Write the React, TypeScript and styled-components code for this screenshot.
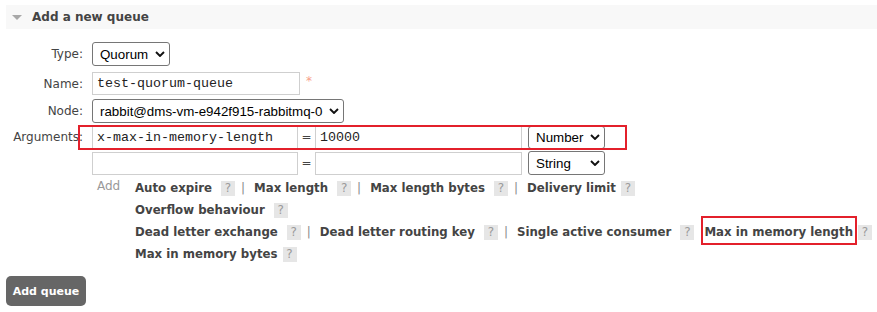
import React from "react";
import styled, { createGlobalStyle } from "styled-components";

const Global = createGlobalStyle`
  html, body { margin: 0; padding: 0; background: #fff; }
  body {
    font-family: "DejaVu Sans", Verdana, sans-serif;
    font-size: 12px;
    color: #484848;
  }
`;

const Page = styled.div`
  padding: 5px 0 0 6px;
  width: 871px;
`;

const SectionHeader = styled.div`
  height: 24px;
  background: #f8f8f8;
  display: flex;
  align-items: center;
  padding-left: 6px;
  gap: 10px;
`;

const Toggle = styled.span`
  width: 0;
  height: 0;
  border-left: 5px solid transparent;
  border-right: 5px solid transparent;
  border-top: 5px solid #a8a8a8;
`;

const Title = styled.h2`
  margin: 0;
  font-size: 12px;
  font-weight: bold;
  color: #444;
`;

const Form = styled.div`
  margin-top: 10px;
  display: flex;
  flex-direction: column;
`;

const Row = styled.div<{ $h: number }>`
  height: ${(p) => p.$h}px;
  display: flex;
  align-items: center;
  position: relative;
`;

const Label = styled.label`
  width: 77px;
  margin-right: 9px;
  flex: none;
  text-align: right;
  color: #444;
`;

const SelectWrap = styled.span<{ $w: number }>`
  position: relative;
  display: inline-flex;
  width: ${(p) => p.$w}px;
  flex: none;
`;

const Select = styled.select<{ $h?: number }>`
  appearance: none;
  -webkit-appearance: none;
  width: 100%;
  height: ${(p) => p.$h ?? 24}px;
  border: 1px solid #767676;
  border-radius: 3px;
  background: #fff;
  padding: 0 12px 0 7px;
  font-family: "Liberation Sans", Arial, sans-serif;
  font-size: 13.33px;
  color: #000;
  outline: none;
`;

const ChevronBox = styled.span`
  position: absolute;
  right: 5px;
  top: 50%;
  transform: translateY(-50%);
  display: flex;
  pointer-events: none;
`;

const TextInput = styled.input<{ $w: number }>`
  box-sizing: border-box;
  width: ${(p) => p.$w}px;
  height: 23px;
  flex: none;
  border: 1px solid #cfcfcf;
  padding: 0 4px;
  font-family: "Liberation Mono", "Courier New", monospace;
  font-size: 13.33px;
  color: #222;
  outline: none;
  background: #fff;
`;

const Mandatory = styled.span`
  color: #f7a08a;
  margin-left: 6px;
  align-self: flex-start;
  margin-top: 5px;
  font-size: 12px;
`;

const Equals = styled.span`
  width: 17px;
  flex: none;
  text-align: center;
  color: #444;
`;

const TypeGap = styled.span`
  width: 6px;
  flex: none;
`;

const Annotation = styled.span`
  position: absolute;
  left: 72px;
  top: 1px;
  width: 549px;
  height: 25px;
  box-sizing: border-box;
  border: 2px solid #e3202b;
  pointer-events: none;
`;

const AddBlock = styled.div`
  display: flex;
  padding-left: 91px;
  padding-top: 1px;
`;

const AddLabel = styled.span`
  width: 38px;
  flex: none;
  color: #999;
  line-height: 22px;
  margin-top: -2px;
`;

const Lines = styled.div`
  display: flex;
  flex-direction: column;
  white-space: nowrap;
`;

const Line = styled.div`
  height: 22px;
  display: flex;
  align-items: center;
  white-space: nowrap;
`;

const Item = styled.span<{ $tight?: boolean }>`
  display: inline-flex;
  align-items: center;
  flex: none;
  gap: ${(p) => (p.$tight ? 5 : 9)}px;
`;

const Link = styled.span<{ $mark?: boolean }>`
  position: relative;
  font-weight: bold;
  font-size: 11.75px;
  color: #444;
  line-height: 14px;
  ${(p) =>
    p.$mark &&
    `&::after {
      content: "";
      position: absolute;
      left: -3px;
      right: -4px;
      top: -9px;
      bottom: -6px;
      border: 2px solid #e3202b;
    }`}
`;

const Help = styled.span`
  width: 14px;
  height: 15px;
  flex: none;
  background: #e6e6e6;
  color: #9a9a9a;
  display: inline-flex;
  align-items: center;
  justify-content: center;
  font-size: 12px;
`;

const Sep = styled.span`
  color: #8a8a8a;
  flex: none;
  margin: 0 9px 0 6px;
`;

const Spacer = styled.span`
  width: 10px;
  flex: none;
`;

const Button = styled.button`
  margin-top: 11px;
  width: 80px;
  height: 30px;
  border: none;
  border-radius: 5px;
  background: #666;
  color: #fff;
  font-family: "DejaVu Sans", Verdana, sans-serif;
  font-size: 11px;
  font-weight: bold;
  padding: 0;
  display: block;
`;

const Chevron = () => (
  <ChevronBox>
    <svg width="10" height="6" viewBox="0 0 10 6">
      <path d="M1 1l4 4 4-4" fill="none" stroke="#111" strokeWidth="1.9" />
    </svg>
  </ChevronBox>
);

type Arg = { label: string; sep?: boolean; tight?: boolean; mark?: boolean };

const lines: Arg[][] = [
  [
    { label: "Auto expire", sep: true },
    { label: "Max length", sep: true },
    { label: "Max length bytes", sep: true },
    { label: "Delivery limit", tight: true },
  ],
  [{ label: "Overflow behaviour" }],
  [
    { label: "Dead letter exchange", sep: true },
    { label: "Dead letter routing key", sep: true },
    { label: "Single active consumer" },
    { label: "Max in memory length", tight: true, mark: true },
  ],
  [{ label: "Max in memory bytes", tight: true }],
];

export default function App() {
  return (
    <Page>
      <Global />
      <SectionHeader>
        <Toggle />
        <Title>Add a new queue</Title>
      </SectionHeader>
      <Form>
        <Row $h={30}>
          <Label>Type:</Label>
          <SelectWrap $w={78}>
            <Select defaultValue="quorum">
              <option value="classic">Classic</option>
              <option value="quorum">Quorum</option>
              <option value="stream">Stream</option>
            </Select>
            <Chevron />
          </SelectWrap>
        </Row>
        <Row $h={29}>
          <Label>Name:</Label>
          <TextInput $w={208} defaultValue="test-quorum-queue" />
          <Mandatory>*</Mandatory>
        </Row>
        <Row $h={26}>
          <Label>Node:</Label>
          <SelectWrap $w={252}>
            <Select defaultValue="n">
              <option value="n">rabbit@dms-vm-e942f915-rabbitmq-0</option>
            </Select>
            <Chevron />
          </SelectWrap>
        </Row>
        <Row $h={26}>
          <Label>Arguments:</Label>
          <TextInput $w={206} defaultValue="x-max-in-memory-length" />
          <Equals>=</Equals>
          <TextInput $w={207} defaultValue="10000" />
          <TypeGap />
          <SelectWrap $w={77}>
            <Select $h={23} defaultValue="number">
              <option value="string">String</option>
              <option value="number">Number</option>
              <option value="boolean">Boolean</option>
              <option value="list">List</option>
            </Select>
            <Chevron />
          </SelectWrap>
          <Annotation />
        </Row>
        <Row $h={26}>
          <Label />
          <TextInput $w={206} defaultValue="" />
          <Equals>=</Equals>
          <TextInput $w={207} defaultValue="" />
          <TypeGap />
          <SelectWrap $w={77}>
            <Select $h={24} defaultValue="string">
              <option value="string">String</option>
              <option value="number">Number</option>
              <option value="boolean">Boolean</option>
              <option value="list">List</option>
            </Select>
            <Chevron />
          </SelectWrap>
        </Row>
        <AddBlock>
          <AddLabel>Add</AddLabel>
          <Lines>
            {lines.map((items, i) => (
              <Line key={i}>
                {items.map((it, j) => (
                  <React.Fragment key={it.label}>
                    <Item $tight={it.tight}>
                      <Link $mark={it.mark}>{it.label}</Link>
                      <Help>?</Help>
                    </Item>
                    {j < items.length - 1 && (it.sep ? <Sep>|</Sep> : <Spacer />)}
                  </React.Fragment>
                ))}
              </Line>
            ))}
          </Lines>
        </AddBlock>
        <Button>Add queue</Button>
      </Form>
    </Page>
  );
}
